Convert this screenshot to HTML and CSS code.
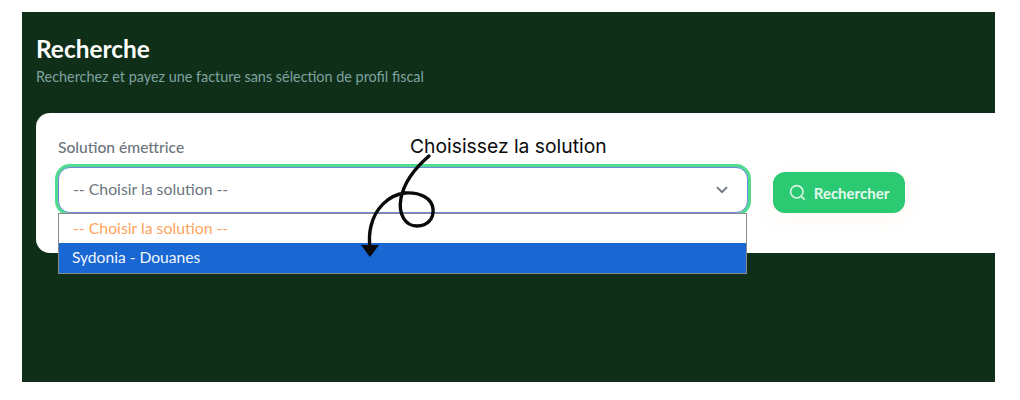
FILE: index.html
```html
<!DOCTYPE html>
<html lang="fr">
<head>
<meta charset="utf-8">
<title>Recherche</title>
<link rel="stylesheet" href="styles.css">
</head>
<body>
<main class="panel">
  <header class="head">
    <h1 class="title">Recherche</h1>
    <p class="subtitle">Recherchez et payez une facture sans sélection de profil fiscal</p>
  </header>
  <section class="card">
    <div class="field">
      <label class="label">Solution émettrice</label>
      <div class="select">
        <span>-- Choisir la solution --</span>
        <svg class="chevron" width="12" height="8" viewBox="0 0 12 8" fill="none"><path d="M1 1.2 6 6.2 11 1.2" stroke="#6c757d" stroke-width="1.8"/></svg>
      </div>
      <ul class="menu">
        <li class="opt placeholder">-- Choisir la solution --</li>
        <li class="opt active">Sydonia - Douanes</li>
      </ul>
    </div>
    <button class="btn" type="button">
      <svg width="17" height="17" viewBox="0 0 17 17" fill="none" stroke="#d9f5e5" stroke-width="1.6"><circle cx="7.8" cy="7.8" r="6.2"/><path d="M12.4 12.4 15.6 15.6"/></svg>
      Rechercher
    </button>
  </section>
</main>
<div class="note">Choisissez la solution</div>
<svg class="arrow" width="90" height="110" viewBox="360 150 90 110" fill="none">
  <path d="M429 156C415 168 404 183 401 198C398 214 405 226 417 226C428 226 434 218 433 209C432 198 420 192 405 193C388 195 375 209 371 226C369 234 369 240 370 248" stroke="#0a0a0a" stroke-width="3.4" stroke-linecap="round"/>
  <path d="M361 245 379 245 370 257Z" fill="#0a0a0a"/>
</svg>
</body>
</html>
```
FILE: styles.css
```css
* { box-sizing: border-box; }
html, body { margin: 0; height: 400px; background: #fff; overflow: hidden; }
body { padding: 12px 25px 18px 22px; font-family: "Lato", "Noto Sans", sans-serif; position: relative; }

.panel { height: 370px; background: #0f2f18; padding: 23px 0 0 14px; }
.head { height: 78px; }
.title { margin: 0; font-size: 24.4px; line-height: 28px; font-weight: 700; color: #fff; }
.subtitle { margin: 5px 0 0; font-size: 14.4px; line-height: 18px; color: #7fa3a0; }

.card { height: 140px; background: #fff; border-radius: 14px 0 0 14px; padding: 24px 0 0 22px; display: flex; align-items: flex-start; gap: 25px; }
.field { width: 690px; position: relative; }
.label { display: block; font-size: 15.6px; line-height: 20px; font-weight: 500; color: #6c757d; margin-bottom: 10px; }
.select { height: 46px; padding: 0 19px 3px 14px; display: flex; align-items: center; justify-content: space-between; background: #fff; border: 1.5px solid #6f86d8; border-radius: 12px; box-shadow: 0 0 0 3px #4fdc8f; font-size: 15.8px; color: #6c757d; }
.chevron { margin-top: 2px; }
.menu { position: absolute; top: 76px; left: 0; right: 1px; margin: 0; padding: 0; list-style: none; background: #fff; border: 1px solid #8a8a8a; font-size: 15.8px; }
.opt { height: 30px; line-height: 27px; padding-left: 14px; }
.placeholder { height: 29px; color: #ffa45c; }
.active { padding-left: 13px; font-size: 15.6px; line-height: 29px; background: #1967d2; color: #f2f6fd; }
.btn { margin-top: 35px; width: 132px; height: 41px; display: flex; align-items: center; justify-content: center; gap: 8px; border: 0; border-radius: 12px; background: #2cc973; color: #e6f9ee; font: 700 15px "Lato", "Noto Sans", sans-serif; box-shadow: 0 6px 20px rgba(255, 160, 90, .08); }

.note { position: absolute; left: 410px; top: 134px; font: 400 19.3px/24px "Inter", sans-serif; color: #0a0a0a; }
.arrow { position: absolute; left: 360px; top: 150px; }
```
